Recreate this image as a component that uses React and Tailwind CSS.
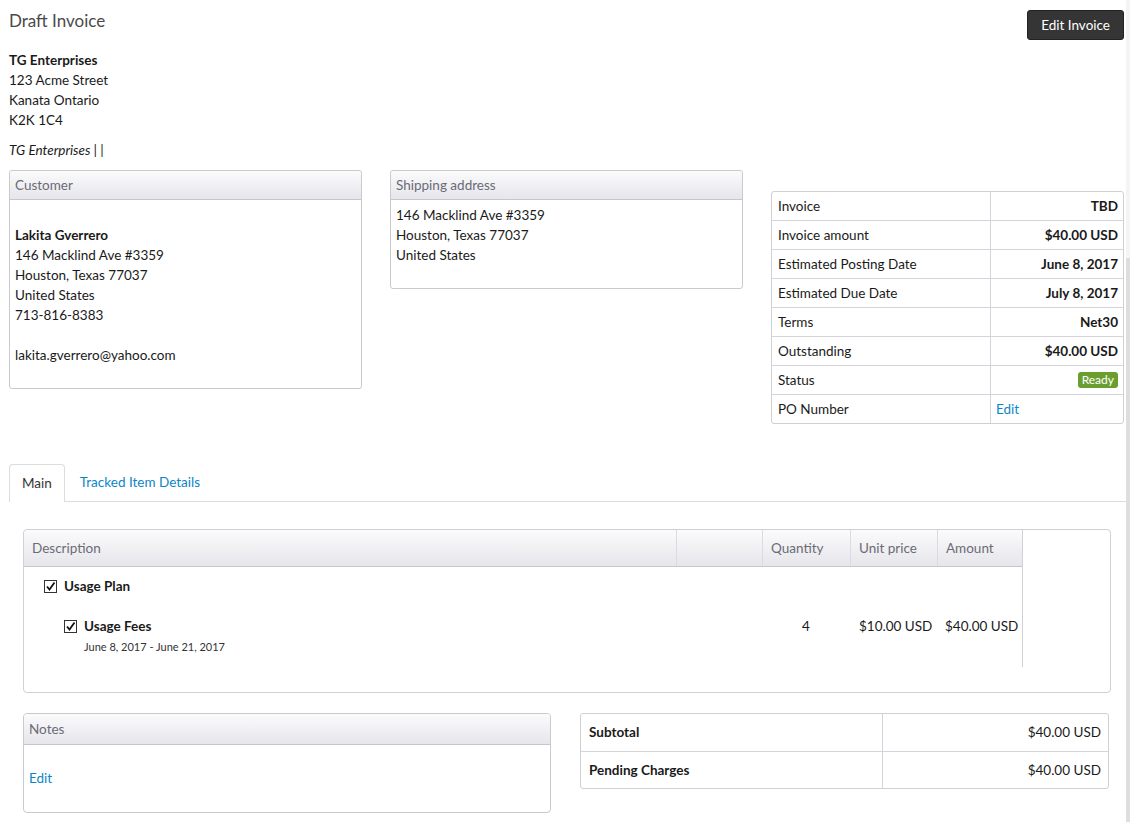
import React from 'react';

const font = { fontFamily: 'Lato, "Open Sans", sans-serif' };

const Check = () => (
  <svg width="13" height="13" viewBox="0 0 13 13" className="shrink-0">
    <rect x="0.5" y="0.5" width="12" height="12" fill="#fff" stroke="#333" />
    <path d="M3 6.5 L5.5 9.5 L10.5 2.5" fill="none" stroke="#111" strokeWidth="1.8" />
  </svg>
);

const PanelHeader = ({ children, h = 'h-[29px]' }) => (
  <div className={`${h} flex items-center px-[5px] text-[13.5px] text-[#6b6b76] bg-gradient-to-b from-[#fbfbfc] to-[#e6e6eb] border-b border-[#c6c6ce] rounded-t-[3px]`}>
    {children}
  </div>
);

const invoiceRows = [
  ['Invoice', 'TBD'],
  ['Invoice amount', '$40.00 USD'],
  ['Estimated Posting Date', 'June 8, 2017'],
  ['Estimated Due Date', 'July 8, 2017'],
  ['Terms', 'Net30'],
  ['Outstanding', '$40.00 USD'],
  ['Status', 'badge'],
  ['PO Number', 'edit'],
];

export default function App() {
  return (
    <div className="flex w-[1130px] min-h-[822px] bg-white text-[#1a1a1a]" style={font}>
      <div className="flex-1 pl-[9px] pr-[2px] pt-[10px]">
        {/* Header */}
        <div className="flex justify-between items-start">
          <h1 className="text-[17px] leading-[22px] text-[#4a4a4a] font-normal">Draft Invoice</h1>
          <button className="h-[30px] px-[13px] bg-[#353535] text-white text-[13.5px] rounded-[3px] border border-[#222]">
            Edit Invoice
          </button>
        </div>

        {/* Company */}
        <div className="mt-[10px] text-[13.5px] leading-[20px]">
          <div className="font-bold">TG Enterprises</div>
          <div>123 Acme Street</div>
          <div>Kanata Ontario</div>
          <div>K2K 1C4</div>
          <div className="mt-[10px] italic">TG Enterprises | |</div>
        </div>

        {/* Panels */}
        <div className="mt-[10px] flex items-start gap-[28px] text-[13.5px] leading-[20px]">
          <div className="w-[353px] h-[219px] border border-[#c9c9cf] rounded-[3px]">
            <PanelHeader>Customer</PanelHeader>
            <div className="px-[5px] pt-[5px]">
              <div>&nbsp;</div>
              <div className="font-bold">Lakita Gverrero</div>
              <div>146 Macklind Ave #3359</div>
              <div>Houston, Texas 77037</div>
              <div>United States</div>
              <div>713-816-8383</div>
              <div>&nbsp;</div>
              <div>lakita.gverrero@yahoo.com</div>
            </div>
          </div>

          <div className="w-[353px] h-[119px] border border-[#c9c9cf] rounded-[3px]">
            <PanelHeader>Shipping address</PanelHeader>
            <div className="px-[5px] pt-[5px]">
              <div>146 Macklind Ave #3359</div>
              <div>Houston, Texas 77037</div>
              <div>United States</div>
            </div>
          </div>

          <div className="mt-[21px] w-[353px] border border-[#cfcfd6] rounded-[3px]">
            {invoiceRows.map(([label, value], i) => (
              <div key={label} className={`flex ${i > 0 ? 'h-[29px] border-t border-[#d4d4da]' : 'h-[28px]'}`}>
                <div className="w-[219px] px-[6px] flex items-center border-r border-[#d4d4da]">{label}</div>
                <div className="flex-1 px-[5px] flex items-center justify-end font-bold">
                  {value === 'badge' ? (
                    <span className="bg-[#6a9f2f] text-white text-[12px] leading-[16px] font-normal px-[4px] rounded-[3px]">Ready</span>
                  ) : value === 'edit' ? (
                    <span className="w-full text-left font-normal text-[#0b86c8]">Edit</span>
                  ) : (
                    value
                  )}
                </div>
              </div>
            ))}
          </div>
        </div>

        {/* Tabs */}
        <div className="mt-[39px] flex items-end border-b border-[#dcdcdc] text-[13.5px] mr-[-2px]">
          <div className="h-[38px] px-[12px] flex items-center border border-b-0 border-[#dcdcdc] rounded-t-[4px] text-[#333] mb-[-1px] bg-white">
            Main
          </div>
          <div className="h-[38px] px-[15px] flex items-center text-[#0b86c8]">Tracked Item Details</div>
        </div>

        {/* Line items */}
        <div className="pl-[14px] pr-[13px]">
          <div className="mt-[27px] h-[164px] border border-[#cfcfd6] rounded-[4px] text-[13.5px]">
            <div className="w-[999px] h-[137px] border-r border-[#d0d0d6] flex flex-col">
              <div className="flex h-[37px] text-[#6b6b76] bg-gradient-to-b from-[#fbfbfc] to-[#e6e6eb] border-b border-[#c6c6ce] rounded-tl-[4px]">
                <div className="w-[652px] px-[8px] flex items-center">Description</div>
                <div className="w-[86px] border-l border-[#dadae0]"></div>
                <div className="w-[88px] px-[8px] flex items-center border-l border-[#dadae0]">Quantity</div>
                <div className="w-[87px] px-[8px] flex items-center border-l border-[#dadae0]">Unit price</div>
                <div className="flex-1 px-[8px] flex items-center border-l border-[#dadae0]">Amount</div>
              </div>
              <div className="flex items-center gap-[7px] pl-[20px] mt-[9px] h-[20px]">
                <Check />
                <span className="font-bold">Usage Plan</span>
              </div>
              <div className="flex mt-[20px]">
                <div className="w-[738px] pl-[40px]">
                  <div className="flex items-center gap-[7px] h-[20px]">
                    <Check />
                    <span className="font-bold">Usage Fees</span>
                  </div>
                  <div className="pl-[20px] text-[11px] leading-[16px] mt-[3px] text-[#333]">June 8, 2017 - June 21, 2017</div>
                </div>
                <div className="w-[88px] h-[20px] flex items-center justify-center">4</div>
                <div className="w-[87px] h-[20px] flex items-center pl-[9px] whitespace-nowrap">$10.00 USD</div>
                <div className="flex-1 h-[20px] flex items-center pl-[8px] whitespace-nowrap">$40.00 USD</div>
              </div>
            </div>
          </div>

          {/* Notes & totals */}
          <div className="mt-[20px] flex items-start gap-[29px] text-[13.5px]">
            <div className="w-[528px] h-[100px] border border-[#c9c9cf] rounded-[4px]">
              <PanelHeader h="h-[31px]">Notes</PanelHeader>
              <div className="px-[5px] mt-[23px] text-[#0b86c8]">Edit</div>
            </div>
            <div className="w-[529px] border border-[#cfcfd6] rounded-[3px]">
              <div className="flex h-[37px]">
                <div className="w-[302px] px-[8px] flex items-center font-bold border-r border-[#d4d4da]">Subtotal</div>
                <div className="flex-1 px-[7px] flex items-center justify-end">$40.00 USD</div>
              </div>
              <div className="flex h-[37px] border-t border-[#d4d4da]">
                <div className="w-[302px] px-[8px] flex items-center font-bold border-r border-[#d4d4da]">Pending Charges</div>
                <div className="flex-1 px-[7px] flex items-center justify-end">$40.00 USD</div>
              </div>
            </div>
          </div>
        </div>
      </div>

      {/* Scrollbar */}
      <div className="w-[5px] flex flex-col bg-[#f4f4f4]">
        <div className="h-[258px]"></div>
        <div className="flex-1 bg-[#dedede]"></div>
      </div>
    </div>
  );
}
